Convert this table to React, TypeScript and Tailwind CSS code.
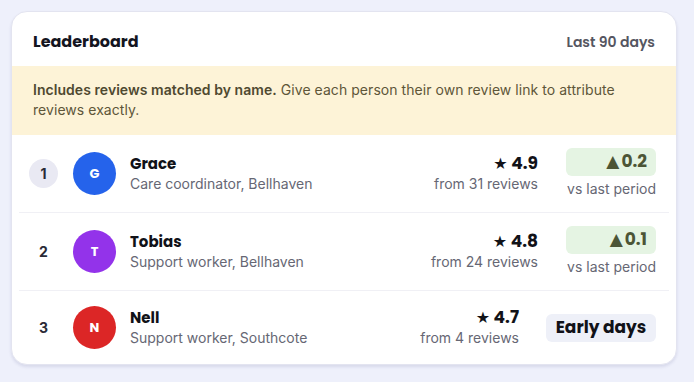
const people = [
  {
    rank: 1,
    initial: "G",
    name: "Grace",
    role: "Care coordinator, Bellhaven",
    color: "bg-[#2563eb]",
    rating: "4.9",
    reviews: "from 31 reviews",
    delta: "0.2",
  },
  {
    rank: 2,
    initial: "T",
    name: "Tobias",
    role: "Support worker, Bellhaven",
    color: "bg-[#9333ea]",
    rating: "4.8",
    reviews: "from 24 reviews",
    delta: "0.1",
  },
  {
    rank: 3,
    initial: "N",
    name: "Nell",
    role: "Support worker, Southcote",
    color: "bg-[#dc2626]",
    rating: "4.7",
    reviews: "from 4 reviews",
    delta: null,
  },
];

const head = "font-['Poppins','DejaVu_Sans',sans-serif]";

export default function App() {
  return (
    <div className="min-h-screen bg-[#eef0fb] p-[11px] pr-[17px] font-['Inter',sans-serif]">
      <div className="w-[666px] bg-white rounded-2xl border border-[#e3e4f0] shadow-[0_2px_3px_rgba(60,60,120,0.12)] overflow-hidden">
        {/* Header */}
        <div className="h-[54px] flex items-start justify-between px-[21px] pt-[18px]">
          <h2 className={`${head} text-[16px] font-bold leading-[24px] text-[#14151f]`}>Leaderboard</h2>
          <span className={`${head} text-[14px] font-semibold leading-[24px] text-[#555661]`}>Last 90 days</span>
        </div>

        {/* Notice */}
        <div className="bg-[#fdf3d7] px-[21px] pt-[14px] pb-[15px] text-[14px] tracking-[0.05px] leading-[20px] text-[#5e5639]">
          <span className="font-semibold text-[#4f4930]">Includes reviews matched by name.</span>{" "}
          Give each person their own review link to attribute reviews exactly.
        </div>

        {/* Rows */}
        <div className="mx-[7px]">
          {people.map((p, i) => (
            <div
              key={p.rank}
              className={`flex items-center px-[10px] pr-[13px] ${
                i < people.length - 1 ? "h-[78px] border-b border-[#f0f0f5]" : "h-[73px]"
              }`}
            >
              <div
                className={`w-[29px] h-[29px] rounded-full flex items-center justify-center text-[14px] font-bold text-[#2a2b36] ${
                  p.rank === 1 ? "bg-[#e9e9f3]" : ""
                }`}
              >
                {p.rank}
              </div>
              <div
                className={`ml-[15px] w-[43px] h-[43px] rounded-full ${p.color} flex items-center justify-center text-white text-[13px] font-bold ${head}`}
              >
                {p.initial}
              </div>
              <div className="ml-[14px] flex-1">
                <div className={`${head} text-[15px] font-bold leading-[20px] text-[#111218]`}>{p.name}</div>
                <div className="text-[14px] leading-[20px] text-[#666774]">{p.role}</div>
              </div>
              <div className="flex flex-col items-end">
                <div className={`${head} text-[17px] font-bold leading-[20px] text-[#111218]`}>
                  <span className="text-[16px]">★</span> {p.rating}
                </div>
                <div className="text-[14px] leading-[20px] text-[#666774]">{p.reviews}</div>
              </div>
              {p.delta ? (
                <div className="ml-[28px] flex flex-col items-end">
                  <div
                    className={`${head} w-[90px] h-[28px] rounded-md bg-[#e5f4e3] flex items-center justify-end pr-[9px] text-[17px] font-bold text-[#4c5536]`}
                  >
                    <span className="text-[17px] mr-[2px]">▲</span>
                    {p.delta}
                  </div>
                  <div className="text-[14px] leading-[20px] mt-[3px] text-[#666774]">vs last period</div>
                </div>
              ) : (
                <div
                  className={`${head} ml-[27px] w-[110px] h-[28px] rounded-md bg-[#eef0f8] flex items-center justify-center text-[17px] font-bold text-[#111218]`}
                >
                  Early days
                </div>
              )}
            </div>
          ))}
        </div>
      </div>
    </div>
  );
}
